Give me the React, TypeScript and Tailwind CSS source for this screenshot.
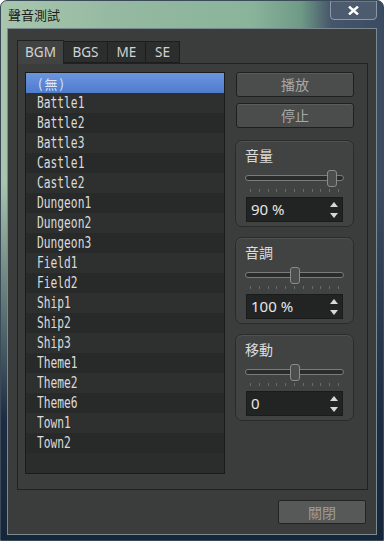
import React from "react";

const items = [
  "(無)", "Battle1", "Battle2", "Battle3", "Castle1", "Castle2", "Dungeon1", "Dungeon2", "Dungeon3",
  "Field1", "Field2", "Ship1", "Ship2", "Ship3", "Theme1", "Theme2", "Theme6", "Town1", "Town2",
];

const cjk = { fontFamily: '"Noto Sans CJK TC", "Noto Sans", sans-serif' };
const sans = { fontFamily: '"Noto Sans", "Noto Sans CJK TC", sans-serif' };
const mono = { fontFamily: '"DejaVu Sans Mono", "Noto Sans CJK TC", monospace' };

function Group({ label, pos, value }: { label: string; pos: number; value: string }) {
  return (
    <div className="h-[87px] rounded-[7px] border border-[#2a2c2c] bg-[#414343] shadow-[inset_0_1px_0_#505252] px-[9px] pt-[4px]">
      <div className="text-[14px] leading-[20px] text-[#dcdcdc]" style={cjk}>{label}</div>
      <div className="relative mt-[5px] h-[16px] mx-[0px]">
        <div className="absolute left-[0px] right-[0px] top-[5px] h-[6px] rounded-[3px] border border-[#7a7c7c] bg-[#2a2c2c]" />
        <div
          className="absolute top-[0px] w-[10px] h-[17px] rounded-[3px] border border-[#8a8c8c] bg-[#4c4e4e]"
          style={{ left: pos }}
        />
      </div>
      <div className="flex justify-between px-[5px] mt-[3px] h-[4px]">
        {Array.from({ length: 11 }).map((_, i) => (
          <div key={i} className="w-[1px] h-[3px] bg-[#6a6c6c]" />
        ))}
      </div>
      <div className="mt-[4px] mx-[1px] h-[25px] border border-[#1a1c1c] bg-[#222424] flex items-center justify-between pl-[4px] pr-[4px]">
        <span className="text-[15px] text-[#e6e6e6] leading-none" style={sans}>{value}</span>
        <div className="flex flex-col gap-[6px] items-center">
          <svg width="8" height="5" viewBox="0 0 8 5"><path d="M0 5 L4 0 L8 5 Z" fill="#d8d8d8" /></svg>
          <svg width="8" height="5" viewBox="0 0 8 5"><path d="M0 0 L8 0 L4 5 Z" fill="#d8d8d8" /></svg>
        </div>
      </div>
    </div>
  );
}

export default function App() {
  return (
    <div
      className="w-[384px] h-[541px] rounded-t-[7px] border border-[#3a4a58] flex flex-col overflow-hidden"
      style={{
        background:
          "linear-gradient(180deg, rgba(0,0,0,0) 0px, rgba(0,0,0,0) 180px, #1c2c42 420px, #16263a 541px), linear-gradient(90deg, #a8c6ae 0px, #94b9a0 120px, #8ab49a 250px, #6f9a86 300px, #46566a 330px, #3a4a60 384px)",
      }}
    >
      <div className="h-[27px] flex items-start justify-between">
        <div className="pl-[7px] pt-[5px] text-[13px] leading-[17px] text-[#1a1a1a]" style={cjk}>聲音測試</div>
        <div className="mr-[6px] mt-[-1px] w-[47px] h-[20px] rounded-b-[4px] border border-[#8a98aa] bg-[#4d5b6e] flex items-center justify-center shadow-[inset_0_1px_0_#6a7888]">
          <svg width="11" height="9" viewBox="0 0 11 9">
            <path d="M1 0.5 L10 8.5 M10 0.5 L1 8.5" stroke="#ffffff" strokeWidth="2.4" />
          </svg>
        </div>
      </div>
      <div className="mx-[6px] h-[507px] border border-[#7a8a90] bg-[#3b3d3d] flex flex-col">
        <div className="pl-[9px] pr-[8px] pt-[11px]">
          <div className="flex h-[23px] items-end" style={sans}>
            <div className="w-[47px] h-[24px] bg-[#414343] border border-[#202222] border-b-0 text-[13.5px] text-[#d2d2d2] flex items-center justify-center relative z-10 mb-[-1px]">BGM</div>
            <div className="w-[44px] h-[22px] bg-[#2c2e2e] border border-[#1c1e1e] border-l-0 text-[13.5px] text-[#d2d2d2] flex items-center justify-center">BGS</div>
            <div className="w-[38px] h-[22px] bg-[#2c2e2e] border border-[#1c1e1e] border-l-0 text-[13.5px] text-[#d2d2d2] flex items-center justify-center">ME</div>
            <div className="w-[34px] h-[22px] bg-[#2c2e2e] border border-[#1c1e1e] border-l-0 text-[13.5px] text-[#d2d2d2] flex items-center justify-center">SE</div>
          </div>
          <div className="h-[427px] border border-[#202222] bg-[#3b3d3d] flex pl-[7px] pt-[8px] gap-[10px]">
            <div className="w-[200px] h-[402px] border border-[#1a1c1c] bg-[#2b2d2d] flex flex-col">
              {items.map((t, i) =>
                i === 0 ? (
                  <div
                    key={t}
                    className="h-[20px] flex items-center pl-[12px] bg-[linear-gradient(180deg,#6a95e0,#4f7ccc)] text-[#dfe8f6]"
                  >
                    <span className="text-[13px] leading-none tracking-[2px] whitespace-nowrap" style={cjk}>
                      (無)
                    </span>
                  </div>
                ) : (
                  <div
                    key={t}
                    className={
                      "h-[20px] flex items-center pl-[11px] text-[#dadada] " +
                      (i % 2 === 1 ? "bg-[#2e3030]" : "bg-[#282a2a]")
                    }
                  >
                    <span
                      className="inline-block origin-left scale-x-[0.75] text-[15px] leading-none whitespace-nowrap"
                      style={mono}
                    >
                      {t}
                    </span>
                  </div>
                )
              )}
            </div>
            <div className="w-[119px] flex flex-col" style={cjk}>
              <div className="h-[25px] ml-[1px] w-[118px] rounded-[3px] border border-[#1e2020] bg-[#4b4d4d] shadow-[inset_0_1px_0_#5a5c5c] text-[14px] text-[#a8a8a8] flex items-center justify-center">播放</div>
              <div className="mt-[6px] h-[25px] ml-[1px] w-[118px] rounded-[3px] border border-[#1e2020] bg-[#4b4d4d] shadow-[inset_0_1px_0_#5a5c5c] text-[14px] text-[#a8a8a8] flex items-center justify-center">停止</div>
              <div className="mt-[12px] flex flex-col gap-[10px]">
                <Group label="音量" pos={82} value="90 %" />
                <Group label="音調" pos={45} value="100 %" />
                <Group label="移動" pos={45} value="0" />
              </div>
            </div>
          </div>
        </div>
        <div className="flex justify-end pr-[10px] pt-[10px]">
          <div className="w-[88px] h-[24px] rounded-[2px] border border-[#222424] bg-[#575959] text-[14px] text-[#9c9c9c] flex items-center justify-center" style={cjk}>關閉</div>
        </div>
      </div>
    </div>
  );
}
